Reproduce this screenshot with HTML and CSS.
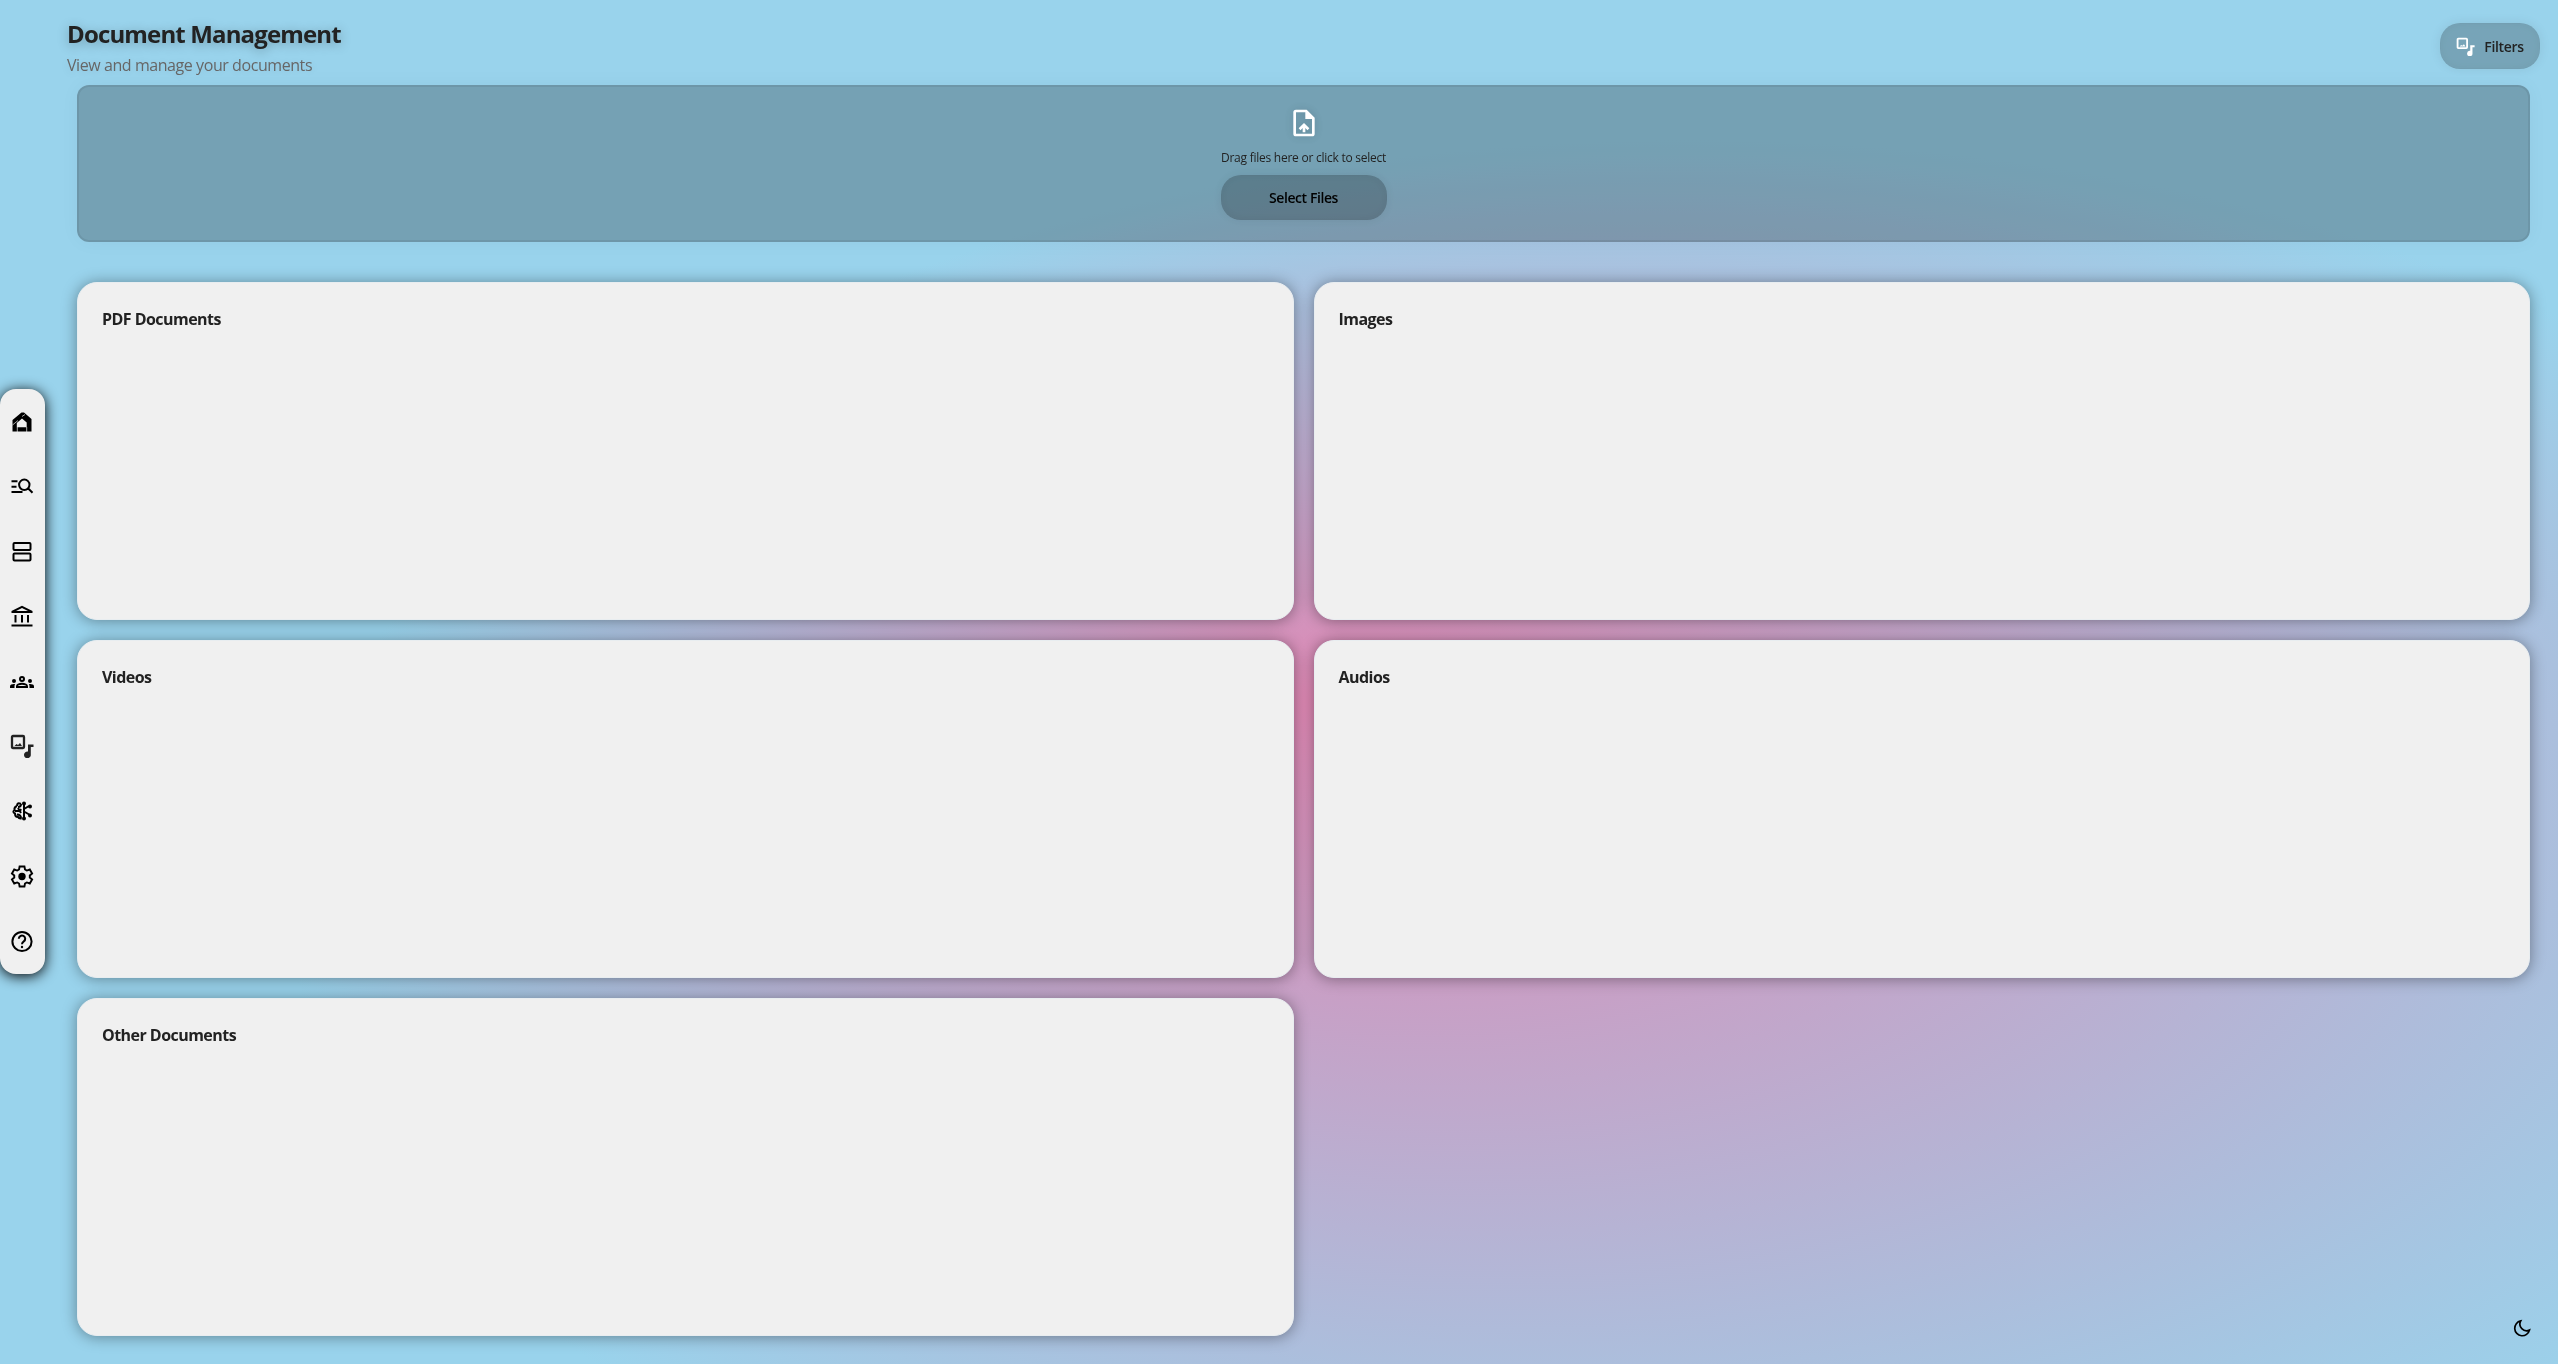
FILE: index.html
```html
<!DOCTYPE html>
<html lang="en">
<head>
<meta charset="utf-8">
<title>Document Management</title>
<link rel="stylesheet" href="styles.css">
</head>
<body>
<svg class="backdrop" viewBox="0 0 2558 1364" preserveAspectRatio="none">
  <defs>
    <radialGradient id="glow" gradientUnits="userSpaceOnUse" cx="0" cy="0" r="1" fx="-.25" fy="-.243" gradientTransform="matrix(1360 0 -40 740 1650 880)">
      <stop offset="0" stop-color="#de87b3"/>
      <stop offset="1" stop-color="#99d3ec"/>
    </radialGradient>
  </defs>
  <rect width="2558" height="1364" fill="url(#glow)"/>
</svg>
<svg class="defs" width="0" height="0">
  <symbol id="media" viewBox="0 0 24 24"><path fill="none" stroke="currentColor" stroke-width="2.300" d="M3 2h10q1 0 1 1v10q0 1-1 1H3q-1 0-1-1V3q0-1 1-1z"/><path fill="currentColor" d="M4.500 12l2-2 1.500 1 2-2 2 3zM18 10.500H23.500v2.500h-2.700v7.500a3.400 3.400 0 1 1-2.800-3z"/></symbol>
</svg>
<nav class="sidebar">
  <svg viewBox="0 0 24 24"><path fill-rule="evenodd" d="M11.500 2.500H14L21.500 9v12.500h-19V10zM12 8.500L6.800 13v4.300h9.900v-4.800z"/><path class="cut" d="M2.500 15L8 10.500M12 6.500L15 4.500M7.300 17v5M16.700 17v5"/></svg>
  <svg viewBox="0 0 24 24"><path d="M1.500 5.200h6v2h-6zm0 5.500h5v2h-5zm0 7.300v-2h11v2z"/><path class="line" d="M19.500 9.800a5.200 5.200 0 1 1-10.400 0 5.200 5.200 0 0 1 10.400 0zM18 13.300l4.500 4.500"/></svg>
  <svg viewBox="0 0 24 24"><rect class="line" x="3.500" y="3" width="17" height="7" rx="1"/><rect class="line" x="3.500" y="13.500" width="17" height="7" rx="1"/></svg>
  <svg viewBox="0 0 24 24"><path d="M4.500 10h2v7.500h-2zm6.500 0h2v7.500h-2zm6 0h2v7.500h-2zM1.500 19.500h21v2h-21zM12 .7L1.500 6V8h21V6zm0 2.300L18 6H6z"/></svg>
  <svg viewBox="0 0 24 24"><path d="M4 13a2 2 0 1 0 0-4 2 2 0 0 0 0 4zm1.130 1.100A7 7 0 0 0 4 14c-.99 0-1.930.21-2.780.58A2.010 2.010 0 0 0 0 16.430V18h4.500v-1.610c0-.83.23-1.610.63-2.290zM20 13a2 2 0 1 0 0-4 2 2 0 0 0 0 4zm4 3.430c0-.81-.48-1.530-1.220-1.850a6.950 6.950 0 0 0-3.910-.48c.4.680.63 1.460.63 2.290V18H24zM16.240 13.650A10.500 10.500 0 0 0 12 12.750c-1.630 0-3.070.39-4.240.9A2.990 2.990 0 0 0 6 16.390V18h12v-1.610c0-1.180-.68-2.260-1.760-2.740zM8.070 16c.09-.23.130-.39.910-.69a8.200 8.200 0 0 1 6.040 0c.77.300.81.460.91.690zM12 8a1 1 0 1 1 0 2 1 1 0 0 1 0-2m0-2a3 3 0 1 0 0 6 3 3 0 0 0 0-6z"/></svg>
  <svg viewBox="0 0 24 24"><use href="#media"/></svg>
  <svg viewBox="0 0 24 24"><path class="line" d="M14 4v16M14 10l5-3M14 12.500l6 3.500M11 5Q7 3 7 7M7 7Q4 8 4.500 11Q2 13 5 14.500Q5 18 8 18q1 2 3.500 1.500M8 8q3 0 3-3M5 12h5l1-2M7 15.500q4 0 4 4M8 9l3 5"/><circle cx="20" cy="7.500" r="2"/><circle cx="20" cy="16.500" r="2"/><circle cx="14" cy="4.500" r="2"/><circle cx="14" cy="19.500" r="2"/></svg>
  <svg viewBox="0 0 24 24"><path class="line" d="M9.500 2h5l.6 3.200 1.900 1.100 3.100-1.100 2.400 4.200-2.400 2v2.200l2.400 2-2.400 4.200-3.100-1.100-1.900 1.100-.6 3.200h-5l-.6-3.200L7 18.700l-3.100 1.100-2.400-4.200 2.400-2v-2.200l-2.400-2L3.900 5.200 7 6.300l1.900-1.100z" transform="translate(.5 .5) scale(.96)"/><circle cx="12" cy="12.500" r="3.700"/></svg>
  <svg viewBox="0 0 24 24"><circle class="line" cx="12" cy="12.500" r="9.600"/><path class="line" d="M8.800 9.800a3.200 3.200 0 1 1 5 2.600Q12 13.700 12 15.300"/><circle cx="12" cy="18" r="1.200"/></svg>
</nav>
<main class="page">
  <header class="header">
    <div>
      <h1>Document Management</h1>
      <p class="subtitle">View and manage your documents</p>
    </div>
    <button class="button filters"><svg viewBox="0 0 24 24"><use href="#media"/></svg><span>Filters</span></button>
  </header>
  <section class="dropzone">
    <svg viewBox="0 0 24 24"><path d="M6 2h8l6 6v12q0 2-2 2H6q-2 0-2-2V4q0-2 2-2zm0 2v16h12V9h-5V4zm5 15v-3.200l-1.600 1.600L8 16l4-4 4 4-1.400 1.400-1.600-1.600V19z"/></svg>
    <p>Drag files here or click to select</p>
    <button class="button select">Select Files</button>
  </section>
  <section class="grid">
    <article class="card"><h2>PDF Documents</h2></article>
    <article class="card"><h2>Images</h2></article>
    <article class="card"><h2>Videos</h2></article>
    <article class="card"><h2>Audios</h2></article>
    <article class="card"><h2>Other Documents</h2></article>
  </section>
</main>
<button class="theme"><svg viewBox="0 0 24 24"><path d="M10.500 3.500a9 9 0 1 0 10.500 11A8 8 0 0 1 10.500 3.500z"/></svg></button>
</body>
</html>
```
FILE: styles.css
```css
* { box-sizing: border-box; margin: 0; padding: 0; }
body {
  height: 1364px;
  overflow: hidden;
  font-family: "Open Sans", "Noto Sans", sans-serif;
  color: #222;
  background: #99d3ec;
}
.backdrop { position: fixed; inset: 0; width: 100%; height: 100%; z-index: -1; }
.defs { position: absolute; }
.sidebar {
  position: fixed;
  left: 0;
  top: 389px;
  width: 45px;
  height: 585px;
  padding: 21px 1px 21px 0;
  display: flex;
  flex-direction: column;
  align-items: center;
  justify-content: space-between;
  border-radius: 16px;
  background: #f0f0f0;
  box-shadow: 0 2px 14px #000;
}
.sidebar svg { width: 24px; height: 24px; fill: #000; }
.line { fill: none; stroke: #000; stroke-width: 2; }
.cut { fill: none; stroke: #f0f0f0; stroke-width: .7; }
.page { padding: 16px 18px 0 67px; }
.header { display: flex; justify-content: space-between; height: 69px; }
h1 { font-size: 24px; line-height: 36px; letter-spacing: -.85px; text-shadow: 0 2px 12px rgba(0, 0, 0, .3); }
.subtitle { font-size: 16px; line-height: 24px; margin-top: 1px; letter-spacing: -.43px; color: #666; text-shadow: 0 2px 10px rgba(0, 0, 0, .12); }
.button {
  height: 46px;
  border: 1px solid rgba(0, 0, 0, .03);
  border-radius: 20px;
  background: rgba(0, 0, 0, .22);
  color: #222;
  font: 600 14px "Open Sans", sans-serif;
  letter-spacing: -.42px;
  box-shadow: 0 0 12px rgba(0, 0, 0, .08), inset 0 0 12px rgba(0, 0, 0, .04);
}
.filters { display: flex; align-items: center; justify-content: center; gap: 9px; width: 100px; margin-top: 7px; letter-spacing: -.35px; }
.filters svg { width: 19px; height: 19px; color: #fff; }
.dropzone {
  display: flex;
  flex-direction: column;
  align-items: center;
  height: 157px;
  margin: 0 10px;
  padding-top: 20px;
  border: 2px solid rgba(0, 0, 0, .07);
  border-radius: 12px;
  background: rgba(0, 0, 0, .235);
  box-shadow: 0 0 20px rgba(0, 0, 0, .04);
}
.dropzone svg { width: 32px; height: 32px; fill: #fff; filter: drop-shadow(0 0 5px rgba(0, 0, 0, .2)); }
.dropzone p { font-size: 12px; line-height: 18px; margin: 10px 0 8px; letter-spacing: -.25px; }
.select { width: 166px; height: 45px; color: #000; }
.grid {
  display: grid;
  grid-template-columns: 1fr 1fr;
  grid-auto-rows: 338px;
  gap: 20px;
  margin: 40px 10px 0;
}
.card {
  padding: 25px 24px 24px;
  border: 1px solid #e8edf0;
  border-radius: 20px;
  background: #f0f0f0;
  box-shadow: 0 1px 15px rgba(0, 0, 0, .38);
}
h2 { font-size: 16px; line-height: 22px; letter-spacing: -.54px; }
.theme {
  position: fixed;
  right: 26px;
  bottom: 26px;
  width: 20px;
  height: 20px;
  border: 0;
  background: none;
}
.theme svg { display: block; width: 20px; height: 20px; fill: none; stroke: #000; stroke-width: 2; }
```
